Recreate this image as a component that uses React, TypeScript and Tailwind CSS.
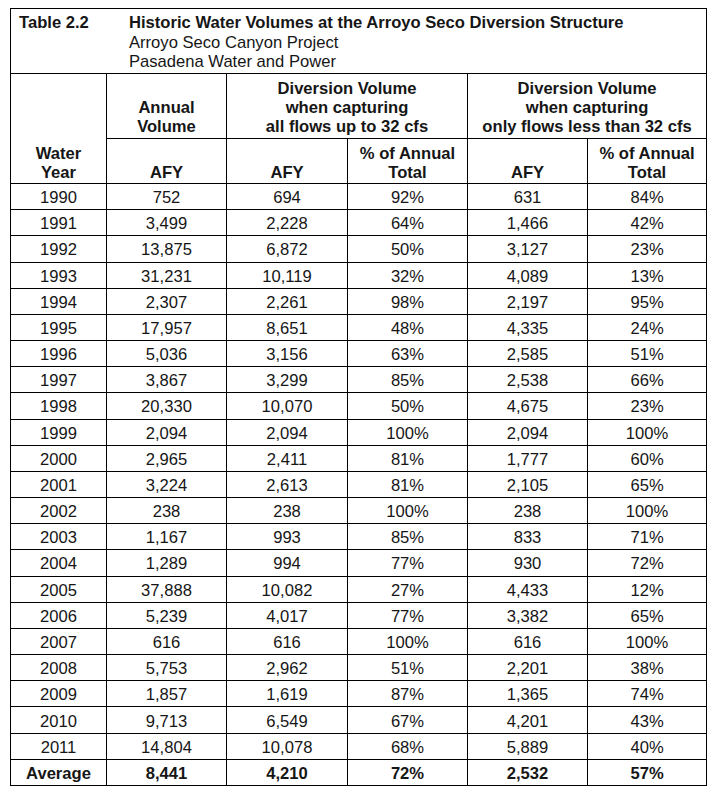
const rows: string[][] = [
  ["1990", "752", "694", "92%", "631", "84%"],
  ["1991", "3,499", "2,228", "64%", "1,466", "42%"],
  ["1992", "13,875", "6,872", "50%", "3,127", "23%"],
  ["1993", "31,231", "10,119", "32%", "4,089", "13%"],
  ["1994", "2,307", "2,261", "98%", "2,197", "95%"],
  ["1995", "17,957", "8,651", "48%", "4,335", "24%"],
  ["1996", "5,036", "3,156", "63%", "2,585", "51%"],
  ["1997", "3,867", "3,299", "85%", "2,538", "66%"],
  ["1998", "20,330", "10,070", "50%", "4,675", "23%"],
  ["1999", "2,094", "2,094", "100%", "2,094", "100%"],
  ["2000", "2,965", "2,411", "81%", "1,777", "60%"],
  ["2001", "3,224", "2,613", "81%", "2,105", "65%"],
  ["2002", "238", "238", "100%", "238", "100%"],
  ["2003", "1,167", "993", "85%", "833", "71%"],
  ["2004", "1,289", "994", "77%", "930", "72%"],
  ["2005", "37,888", "10,082", "27%", "4,433", "12%"],
  ["2006", "5,239", "4,017", "77%", "3,382", "65%"],
  ["2007", "616", "616", "100%", "616", "100%"],
  ["2008", "5,753", "2,962", "51%", "2,201", "38%"],
  ["2009", "1,857", "1,619", "87%", "1,365", "74%"],
  ["2010", "9,713", "6,549", "67%", "4,201", "43%"],
  ["2011", "14,804", "10,078", "68%", "5,889", "40%"],
];

const average = ["Average", "8,441", "4,210", "72%", "2,532", "57%"];

const cell = "border border-black p-0 text-center";

export default function App() {
  return (
    <div className="bg-white w-[714px] h-[795px] pt-[8px] pl-[10px] text-[#161616] font-['Liberation_Sans',Arial,sans-serif]">
      <table className="table-fixed border-collapse w-[696px] text-[16.6px] leading-[19px]">
        <colgroup>
          <col className="w-[96px]" />
          <col className="w-[120px]" />
          <col className="w-[121px]" />
          <col className="w-[120px]" />
          <col className="w-[120px]" />
          <col className="w-[119px]" />
        </colgroup>
        <tbody>
          <tr className="h-[65px]">
            <td colSpan={6} className="border border-black p-0 align-top">
              <div className="flex pt-[4px] leading-[19.5px]">
                <div className="w-[118px] pl-[8px] font-bold">Table 2.2</div>
                <div>
                  <div className="font-bold">Historic Water Volumes at the Arroyo Seco Diversion Structure</div>
                  <div>Arroyo Seco Canyon Project</div>
                  <div>Pasadena Water and Power</div>
                </div>
              </div>
            </td>
          </tr>
          <tr className="h-[65px] font-bold">
            <td rowSpan={2} className={`${cell} align-bottom pb-[1px]`}>
              Water
              <br />
              Year
            </td>
            <td className={`${cell} align-bottom pb-[2px]`}>
              Annual
              <br />
              Volume
            </td>
            <td colSpan={2} className={`${cell} align-bottom pb-[2px]`}>
              Diversion Volume
              <br />
              when capturing
              <br />
              all flows up to 32 cfs
            </td>
            <td colSpan={2} className={`${cell} align-bottom pb-[2px]`}>
              Diversion Volume
              <br />
              when capturing
              <br />
              only flows less than 32 cfs
            </td>
          </tr>
          <tr className="h-[45px] font-bold">
            <td className={`${cell} align-bottom pb-[1px]`}>AFY</td>
            <td className={`${cell} align-bottom pb-[1px]`}>AFY</td>
            <td className={`${cell} align-bottom pb-[1px]`}>
              % of Annual
              <br />
              Total
            </td>
            <td className={`${cell} align-bottom pb-[1px]`}>AFY</td>
            <td className={`${cell} align-bottom pb-[1px]`}>
              % of Annual
              <br />
              Total
            </td>
          </tr>
          {rows.map((r) => (
            <tr key={r[0]} className="h-[26.18px]">
              {r.map((v, i) => (
                <td key={i} className={`${cell} align-middle pt-[2px]`}>
                  {v}
                </td>
              ))}
            </tr>
          ))}
          <tr className="h-[26px] font-bold">
            {average.map((v, i) => (
              <td key={i} className={`${cell} align-middle pt-[2px]`}>
                {v}
              </td>
            ))}
          </tr>
        </tbody>
      </table>
    </div>
  );
}
